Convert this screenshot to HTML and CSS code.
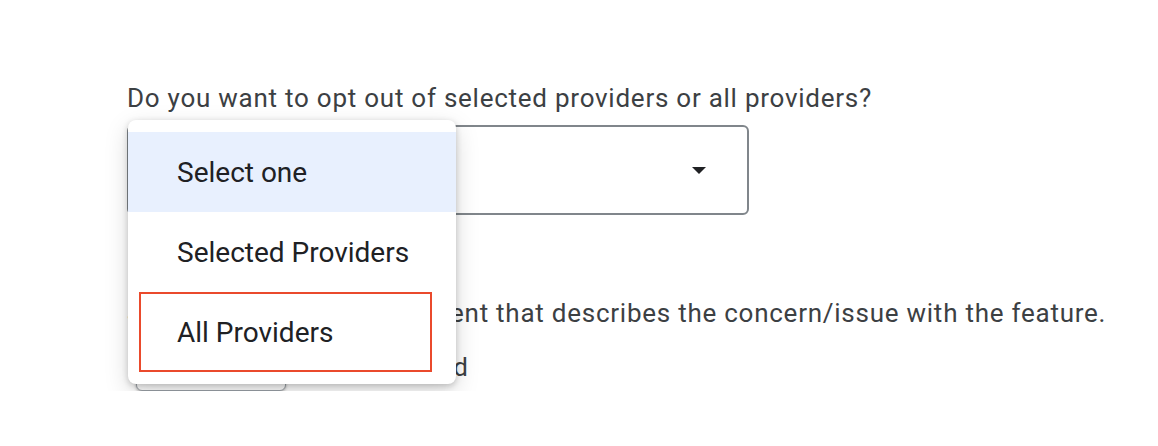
FILE: index.html
```html
<!DOCTYPE html>
<html lang="en">
<head>
    <meta charset="UTF-8">
    <meta name="viewport" content="width=device-width, initial-scale=1.0">
    <title>Opt out</title>
    <link rel="stylesheet" href="styles.css">
</head>
<body>

<div class="form">
    <div class="field">
        <label class="question" for="scope">Do you want to opt out of selected providers or all providers?</label>
        <div class="select-wrap">
            <div class="select" id="scope">
                <svg class="caret" width="14" height="7" viewBox="0 0 14 7"><path d="M0 0h14L7 7z" fill="#202124"/></svg>
            </div>
            <ul class="menu">
                <li class="option active">Select one</li>
                <li class="option">Selected Providers</li>
                <li class="option marked">All Providers</li>
            </ul>
        </div>
    </div>

    <div class="field upload">
        <p class="question">Share a supporting document that describes the concern/issue with the feature.</p>
        <div class="file-row">
            <button class="file-btn">Choose file</button>
            <span class="file-name">Not uploaded</span>
        </div>
    </div>
</div>

</body>
</html>
```

FILE: styles.css
```css
body {
    margin: 0;
    background-color: #fff;
    font-family: Roboto, "Liberation Sans", sans-serif;
    color: #3c4043;
}

.form {
    padding: 82px 0 0 127px;
}

.question {
    display: block;
    margin: 0;
    font-size: 26px;
    line-height: 32px;
    letter-spacing: 0.75px;
    white-space: nowrap;
}

.select-wrap {
    position: relative;
    margin-top: 11px;
    width: 622px;
}

.select {
    box-sizing: border-box;
    height: 90px;
    border: 2px solid #80868b;
    border-radius: 6px;
    display: flex;
    align-items: center;
    justify-content: flex-end;
    padding-right: 41px;
}

.menu {
    position: absolute;
    top: -5px;
    left: 1px;
    width: 328px;
    margin: 0;
    padding: 12px 0;
    list-style: none;
    background-color: #fff;
    border-radius: 8px;
    box-shadow: 0 2px 6px rgba(0, 0, 0, 0.2), 0 8px 24px rgba(0, 0, 0, 0.15);
    z-index: 2;
}

.option {
    box-sizing: border-box;
    height: 80px;
    display: flex;
    align-items: center;
    padding-left: 49px;
    font-size: 28px;
    color: #202124;
}

.option.active {
    background-color: #e8f0fe;
}

.option.marked {
    margin: 0 24px 0 11px;
    padding-left: 36px;
    border: 2px solid #ea4a2c;
}

.upload {
    margin-top: 82px;
}

.file-row {
    display: flex;
    align-items: center;
    gap: 18px;
    margin-top: 14px;
}

.file-btn {
    width: 150px;
    height: 48px;
    margin-left: 9px;
    font-family: inherit;
    font-size: 20px;
    color: #1a73e8;
    background-color: #fff;
    border: 1px solid #9aa0a6;
    border-radius: 6px;
    box-shadow: 0 1px 3px rgba(0, 0, 0, 0.3);
}

.file-name {
    font-size: 26px;
    letter-spacing: 0.75px;
}
```
